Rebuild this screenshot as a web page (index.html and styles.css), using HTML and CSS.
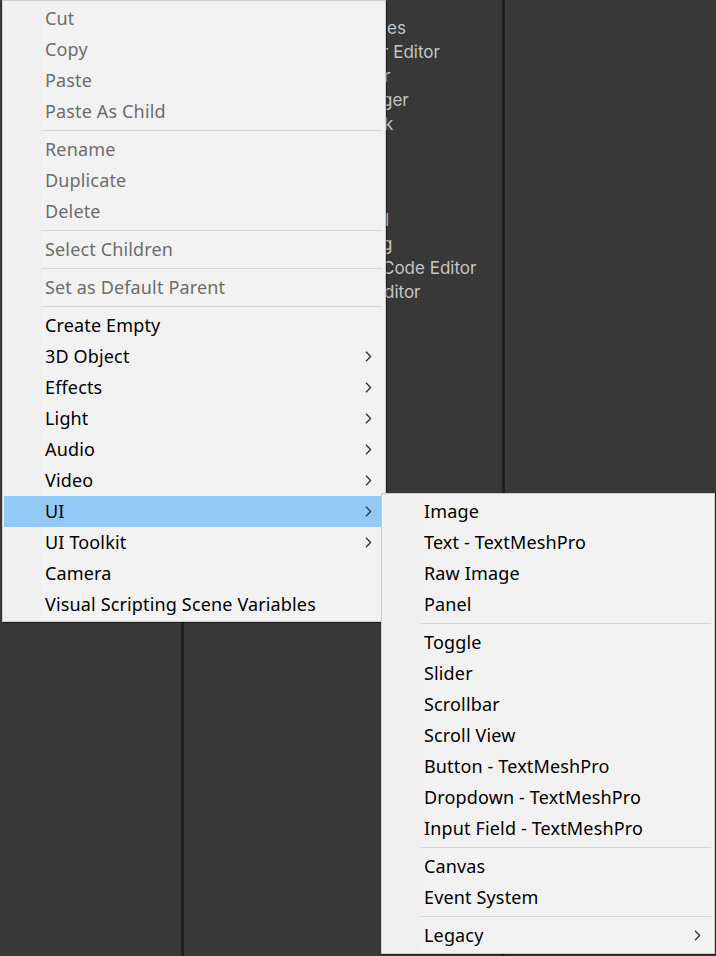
FILE: index.html
```html
<!DOCTYPE html>
<html>
<head>
<meta charset="utf-8">
<link rel="stylesheet" href="styles.css">
</head>
<body>
<div class="desktop">
  <div class="panel p1"></div>
  <div class="splitter"></div>
  <div class="panel p2">
    <div class="winlist">
      <div class="wl i5">es</div>
      <div class="wl">r Editor</div>
      <div class="wl i2">r</div>
      <div class="wl">ger</div>
      <div class="wl i2">k</div>
      <div class="wl"></div>
      <div class="wl"></div>
      <div class="wl"></div>
      <div class="wl i3">l</div>
      <div class="wl">g</div>
      <div class="wl">Code Editor</div>
      <div class="wl i2">ditor</div>
    </div>
  </div>
  <div class="splitter"></div>
  <div class="panel p3"></div>

  <div class="menu main">
    <div class="item dis">Cut</div>
    <div class="item dis">Copy</div>
    <div class="item dis">Paste</div>
    <div class="item dis">Paste As Child</div>
    <div class="sep"></div>
    <div class="item dis">Rename</div>
    <div class="item dis">Duplicate</div>
    <div class="item dis">Delete</div>
    <div class="sep"></div>
    <div class="item dis">Select Children</div>
    <div class="sep"></div>
    <div class="item dis">Set as Default Parent</div>
    <div class="sep"></div>
    <div class="item">Create Empty</div>
    <div class="item sub">3D Object<svg class="chev" width="7" height="11" viewBox="0 0 7 11"><path d="M1 0.8 L5.6 5.5 L1 10.2" /></svg></div>
    <div class="item sub">Effects<svg class="chev" width="7" height="11" viewBox="0 0 7 11"><path d="M1 0.8 L5.6 5.5 L1 10.2" /></svg></div>
    <div class="item sub">Light<svg class="chev" width="7" height="11" viewBox="0 0 7 11"><path d="M1 0.8 L5.6 5.5 L1 10.2" /></svg></div>
    <div class="item sub">Audio<svg class="chev" width="7" height="11" viewBox="0 0 7 11"><path d="M1 0.8 L5.6 5.5 L1 10.2" /></svg></div>
    <div class="item sub">Video<svg class="chev" width="7" height="11" viewBox="0 0 7 11"><path d="M1 0.8 L5.6 5.5 L1 10.2" /></svg></div>
    <div class="item sub hl">UI<svg class="chev" width="7" height="11" viewBox="0 0 7 11"><path d="M1 0.8 L5.6 5.5 L1 10.2" /></svg></div>
    <div class="item sub">UI Toolkit<svg class="chev" width="7" height="11" viewBox="0 0 7 11"><path d="M1 0.8 L5.6 5.5 L1 10.2" /></svg></div>
    <div class="item">Camera</div>
    <div class="item">Visual Scripting Scene Variables</div>
  </div>

  <div class="menu submenu">
    <div class="item">Image</div>
    <div class="item">Text - TextMeshPro</div>
    <div class="item">Raw Image</div>
    <div class="item">Panel</div>
    <div class="sep"></div>
    <div class="item">Toggle</div>
    <div class="item">Slider</div>
    <div class="item">Scrollbar</div>
    <div class="item">Scroll View</div>
    <div class="item">Button - TextMeshPro</div>
    <div class="item">Dropdown - TextMeshPro</div>
    <div class="item">Input Field - TextMeshPro</div>
    <div class="sep"></div>
    <div class="item">Canvas</div>
    <div class="item">Event System</div>
    <div class="sep"></div>
    <div class="item sub">Legacy<svg class="chev" width="7" height="11" viewBox="0 0 7 11"><path d="M1 0.8 L5.6 5.5 L1 10.2" /></svg></div>
  </div>
</div>
</body>
</html>
```

FILE: styles.css
```css
html, body {
  margin: 0;
  padding: 0;
}
body {
  background: #383838;
  width: 716px;
  height: 956px;
  overflow: hidden;
}
.desktop {
  position: relative;
  display: flex;
  width: 716px;
  height: 956px;
}
.panel {
  background: #383838;
  height: 100%;
}
.p1 { width: 181px; }
.p2 { width: 318px; }
.p3 { flex: 1; }
.splitter {
  width: 3px;
  background: #1f1f1f;
  height: 100%;
}
.winlist {
  padding-top: 16px;
  padding-left: 198px;
  font-family: Inter, "Liberation Sans", sans-serif;
  font-size: 17px;
  color: #c4c4c4;
  white-space: nowrap;
}
.wl {
  height: 24px;
  line-height: 24px;
}
.i2 { padding-left: 2px; }
.i3 { padding-left: 3px; }
.i5 { padding-left: 5px; }

.menu {
  position: absolute;
  background: #f2f2f2;
  border: 1px solid #cccccc;
  padding: 2px 1px;
  box-sizing: border-box;
  font-family: "Noto Sans", "Open Sans", sans-serif;
  font-size: 18px;
  letter-spacing: 0.15px;
  color: #000;
  box-shadow: 1px 1px 1px rgba(0,0,0,0.35);
}
.menu::before {
  content: "";
  position: absolute;
  left: 1px;
  top: 2px;
  bottom: 2px;
  width: 38px;
  background: #f0f0f0;
}
.main {
  left: 2px;
  top: 0;
  width: 384px;
  height: 622px;
  z-index: 2;
}
.submenu {
  left: 381px;
  top: 493px;
  width: 334px;
  height: 461px;
  z-index: 3;
}
.item {
  position: relative;
  height: 31px;
  line-height: 31px;
  padding-left: 41px;
  display: flex;
  align-items: center;
  white-space: nowrap;
}
.item.dis {
  color: #6d6d6d;
}
.item.hl {
  background: #91c9f7;
}
.chev {
  margin-left: auto;
  margin-right: 12px;
  fill: none;
  stroke: #333333;
  stroke-width: 1.3;
}
.sep {
  position: relative;
  height: 7px;
  display: flex;
  align-items: center;
  padding-left: 38px;
  padding-right: 2px;
}
.sep::after {
  content: "";
  display: block;
  flex: 1;
  height: 1px;
  background: #d7d7d7;
}
```
